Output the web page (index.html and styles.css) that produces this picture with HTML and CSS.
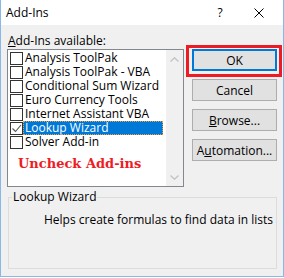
FILE: index.html
```html
<!DOCTYPE html>
<html>
<head>
<meta charset="utf-8">
<link rel="stylesheet" href="styles.css">
</head>
<body>
<div class="dialog">
  <div class="titlebar">
    <span class="title">Add-Ins</span>
    <span class="help">?</span>
    <span class="close">
      <svg width="10" height="10" viewBox="0 0 10 10"><path d="M0.5 0.5 L9.5 9.5 M9.5 0.5 L0.5 9.5" stroke="#000" stroke-width="1" fill="none"/></svg>
    </span>
  </div>
  <div class="content">
    <div class="top">
      <div class="left">
        <div class="label"><u>A</u>dd-Ins available:</div>
        <div class="listbox">
          <ul class="items">
            <li class="item"><span class="cb"></span><span class="txt">Analysis ToolPak</span></li>
            <li class="item"><span class="cb"></span><span class="txt">Analysis ToolPak - VBA</span></li>
            <li class="item"><span class="cb"></span><span class="txt">Conditional Sum Wizard</span></li>
            <li class="item"><span class="cb"></span><span class="txt">Euro Currency Tools</span></li>
            <li class="item"><span class="cb"></span><span class="txt">Internet Assistant VBA</span></li>
            <li class="item selected"><span class="cb checked"><svg width="11" height="11" viewBox="0 0 11 11"><path d="M1.5 5.5 L4.5 8.5 L10 2" stroke="#555" stroke-width="1.1" fill="none"/></svg></span><span class="txt">Lookup Wizard</span></li>
            <li class="item"><span class="cb"></span><span class="txt">Solver Add-in</span></li>
          </ul>
          <div class="scrollbar">
            <svg class="arrow" width="9" height="5" viewBox="0 0 9 5"><path d="M0.5 4.5 L4.5 0.8 L8.5 4.5" stroke="#c2c2c2" stroke-width="1.3" fill="none"/></svg>
            <svg class="arrow" width="9" height="5" viewBox="0 0 9 5"><path d="M0.5 0.5 L4.5 4.2 L8.5 0.5" stroke="#c2c2c2" stroke-width="1.3" fill="none"/></svg>
          </div>
          <div class="annotation">Uncheck Add-ins</div>
        </div>
      </div>
      <div class="buttons">
        <button class="btn default">OK<span class="highlight"></span></button>
        <button class="btn">Cancel</button>
        <button class="btn"><u>B</u>rowse...</button>
        <button class="btn">A<u>u</u>tomation...</button>
      </div>
    </div>
    <fieldset class="group">
      <legend>Lookup Wizard</legend>
      <p class="desc">Helps create formulas to find data in lists</p>
    </fieldset>
  </div>
</div>
</body>
</html>
```

FILE: styles.css
```css
* { box-sizing: border-box; }
html, body { margin: 0; padding: 0; background: #ffffff; }
body { width: 284px; height: 278px; overflow: hidden; font-family: "Open Sans", "Noto Sans", sans-serif; font-size: 12px; color: #000; }

.dialog {
  width: 284px;
  height: 277px;
  border: 1px solid #88b8e8;
  border-top: none;
  background: #f0f0f0;
  display: flex;
  flex-direction: column;
}

.titlebar {
  height: 25px;
  background: #ffffff;
  display: flex;
  align-items: center;
  padding-left: 5px;
  position: relative;
}
.title { font-size: 12px; flex: 1; line-height: 25px; }
.help { width: 30px; text-align: center; margin-right: 19px; font-size: 12px; line-height: 25px; }
.close { width: 10px; height: 10px; margin-right: 19px; display: flex; }

.content { padding: 7px 0 0 6px; flex: 1; display: flex; flex-direction: column; }
.top { display: flex; gap: 8px; }

.left { width: 177px; display: flex; flex-direction: column; }
.label { height: 17px; line-height: 17px; padding-left: 1px; }

.listbox {
  width: 177px;
  height: 138px;
  border: 1px solid #828790;
  background: #ffffff;
  display: flex;
  position: relative;
}
.items { list-style: none; margin: 0; padding: 1px 0 0 2px; flex: 1; }
.item { height: 14px; display: flex; align-items: flex-start; }
.cb {
  width: 13px; height: 13px;
  border: 1px solid #333333;
  background: #fff;
  margin-top: 1px;
  flex: none;
  display: flex; align-items: center; justify-content: center;
}
.txt { padding-left: 2px; line-height: 14px; height: 14px; white-space: nowrap; }
.selected .txt {
  background: #0078d7;
  color: #fff;
  width: 140px;
  outline: 1px dotted #f0a030;
  outline-offset: -1px;
}
.scrollbar {
  width: 17px;
  background: #f0f0f0;
  display: flex;
  flex-direction: column;
  justify-content: space-between;
  align-items: center;
  padding: 7px 0 6px 0;
}
.arrow { display: block; }
.annotation {
  position: absolute;
  left: 10px;
  top: 106px;
  font-family: "DejaVu Serif", "Liberation Serif", serif;
  font-weight: bold;
  font-size: 13px;
  color: #ee1c25;
  line-height: 16px;
}

.buttons { display: flex; flex-direction: column; gap: 8px; padding-top: 17px; }
.btn {
  width: 85px;
  height: 22px;
  background: #e1e1e1;
  border: 1px solid #adadad;
  font-family: inherit;
  font-size: 12px;
  color: #000;
  padding: 0;
  position: relative;
}
.btn.default { border: 2px solid #0078d7; }
.highlight {
  position: absolute;
  left: -8px;
  top: -6px;
  width: 96px;
  height: 32px;
  border: 3px solid #ed1c24;
}

.group {
  margin: 3px 0 0 1px;
  width: 269px;
  height: 79px;
  border: 1px solid #dcdcdc;
  padding: 0;
}
.group legend { padding: 0 1px; margin-left: 3px; line-height: 14px; }
.desc { margin: 9px 0 0 35px; line-height: 14px; }
```
